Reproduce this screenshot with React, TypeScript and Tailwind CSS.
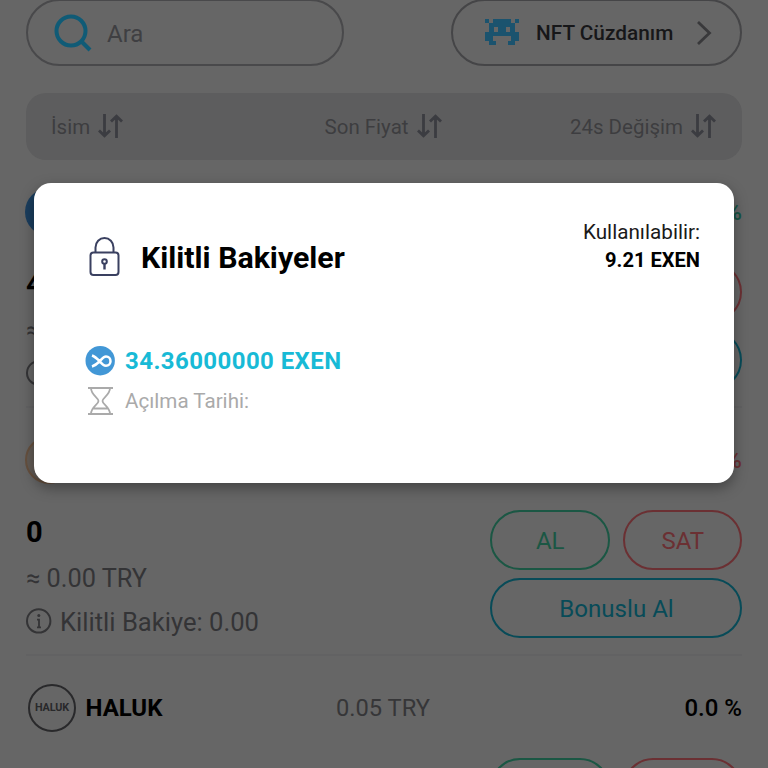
import React from 'react';

function SortIcon() {
  return (
    <svg className="h-[26px] w-[25px] shrink-0" viewBox="0 0 25 26" fill="none" stroke="#3b3c41" strokeWidth="2.8">
      <path d="M6.500 0v22M1 16.500l5.500 5.300 5.500-5.300M18.500 24V3M13 7.500l5.500-5.300 5.500 5.300" />
    </svg>
  );
}

function Invader() {
  return (
    <svg className="h-[27px] w-[34px] shrink-0" viewBox="0 0 34 27" fill="#1b536e">
      <path
        fillRule="evenodd"
        d="M8 0h18v4h4v9h4v9h-4v4h-7v-4h3v-5H8v5h3v4H4v-4H0v-9H4V4h4zM9 8v5h4V8zM21 8v5h4V8z"
      />
      <path d="M0 0h4v4H0zM30 0h4v4h-4z" />
    </svg>
  );
}

function InfoIcon() {
  return (
    <svg className="mb-[2px] h-[26px] w-[26px] shrink-0" viewBox="0 0 26 26" fill="none" stroke="#343436" strokeWidth="2">
      <circle cx="12.700" cy="12.900" r="11.700" />
      <path d="M11 11.700h2v8M11 19.400h4" strokeWidth="1.800" />
      <circle cx="12.800" cy="7.600" r="1.500" fill="#343436" stroke="none" />
    </svg>
  );
}

type RowProps = {
  logo: React.ReactNode;
  name: string;
  price: string;
  change: string;
  changeClass: string;
  amount?: string;
};

function CoinRow({ logo, name, price, change, changeClass, amount }: RowProps) {
  return (
    <section className="h-[248px] shrink-0 border-b-2 border-[#626263] pt-[27px]">
      <div className="grid h-[50px] grid-cols-3 items-center">
        <div className="flex items-center">
          <div className="h-12 w-[60px]">{logo}</div>
          <span className="-ml-[0.500px] text-[24px] font-bold text-black">{name}</span>
        </div>
        <span className="pt-px pr-[2px] text-center text-[23.7px] text-[#363638]">{price}</span>
        <span className={`text-right text-[24px] font-medium ${changeClass}`}>{change}</span>
      </div>
      <div className="flex justify-end pt-[25px]">
        {amount && (
          <div className="mr-auto flex flex-col">
            <span className="h-[44px] text-[29px] leading-[44px] font-bold text-black">{amount}</span>
            <span className="mt-[3px] h-[44px] text-[25.3px] leading-[44px] text-[#343436]">≈ 0.00 TRY</span>
            <div className="flex h-[42px] items-center gap-2 text-[25.600px] text-[#343436]">
              <InfoIcon />
              <span>Kilitli Bakiye: 0.00</span>
            </div>
          </div>
        )}
        <div className="grid w-[252px] grid-cols-2 content-start gap-x-[13px] gap-y-2 text-[24px]">
          <button className="h-[60px] rounded-full border-2 border-[#1b5744] pt-px pl-px text-[#1b5744]">AL</button>
          <button className="h-[60px] rounded-full border-2 border-[#6b3033] pt-px pl-px text-[#6b3033]">SAT</button>
          <button className="col-span-2 h-[60px] rounded-full border-2 border-[#084b58] pt-[2px] pl-px text-[24.1px] text-[#084b58]">
            Bonuslu Al
          </button>
        </div>
      </div>
    </section>
  );
}

function LockedBalances() {
  return (
    <div
      role="dialog"
      className="absolute top-[183px] left-[34px] h-[300px] w-[700px] rounded-[17px] bg-white pr-[34px] pl-[51px] shadow-[0_5px_14px_0px_rgba(0,0,0,0.35)]"
    >
      <div className="flex justify-between pt-[36px]">
        <div className="flex items-center pt-[18px]">
          <svg className="mb-px h-[40px] w-[38px]" viewBox="0 0 38 40" fill="none" stroke="#3a4060" strokeWidth="2">
            <rect x="5.500" y="15.500" width="28" height="22.500" rx="3" />
            <path d="M10.500 15.500V10.500a9 9.500 0 0 1 18 0v5" />
            <circle cx="19.500" cy="24.500" r="2.300" />
            <path d="M19.500 26.500v6" strokeWidth="2.400" />
          </svg>
          <h1 className="pl-[18px] text-[30.3px] leading-9 font-bold text-black">Kilitli Bakiyeler</h1>
        </div>
        <div className="flex flex-col items-end text-[20.700px] leading-[27.500px] text-black">
          <span className="text-[#1a1a1a]">Kullanılabilir:</span>
          <span className="text-[20.100px] font-bold">9.21 EXEN</span>
        </div>
      </div>
      <div className="flex items-center gap-[9px] pt-[64px]">
        <svg className="h-[30px] w-[31px]" viewBox="0 0 31 30" fill="none">
          <circle cx="15.200" cy="14.700" r="14.700" fill="#4297d6" />
          <path
            d="M7 9.500c3 1 5.500 3.500 8 6 2.500 3.500 4.500 4.200 6 4.200 2.700 0 4.500-2 4.500-4.500s-1.800-4.700-4.500-4.700c-3 0-4.500 3-6.500 5S10 19.500 7 20.500"
            stroke="#fff"
            strokeWidth="2.500"
          />
        </svg>
        <span className="text-[24px] leading-[38px] font-bold tracking-[0.420px] text-[#18bad6]">34.36000000 EXEN</span>
      </div>
      <div className="flex items-center gap-[9px]">
        <svg className="h-[30px] w-[31px]" viewBox="0 0 31 30" fill="none" stroke="#aaa" strokeWidth="1.800">
          <path d="M3 2h25M3 28h25M6 2c0 7 7.500 9.500 7.500 13S6 21 6 28M25 2c0 7-7.500 9.500-7.500 13S25 21 25 28M8 22.500h15" />
        </svg>
        <span className="pt-px text-[20.600px] leading-[40px] text-[#aaa]">Açılma Tarihi:</span>
      </div>
    </div>
  );
}

export default function App() {
  return (
    <main className="relative flex h-[768px] w-[768px] flex-col overflow-hidden bg-[#666] px-[26px] font-['Roboto',sans-serif] whitespace-nowrap">
      <div className="-mt-px flex h-[67px] shrink-0 justify-between">
        <div className="flex w-[318px] items-center rounded-full border-2 border-[#49494b] pl-[26px]">
          <svg className="h-[38px] w-[38px]" viewBox="0 0 38 38" fill="none" stroke="#105b76" strokeWidth="4">
            <circle cx="17" cy="17" r="14.500" />
            <path d="m27 27 9 9" />
          </svg>
          <span className="pt-[2px] pl-[15px] text-[24px] text-[#3f3f42]">Ara</span>
        </div>
        <button className="flex w-[291px] items-center rounded-full border-2 border-[#454547] pl-[32px] text-[20.800px] font-medium text-[#171719]">
          <Invader />
          <span className="pt-[2px] pl-[17px]">NFT Cüzdanım</span>
          <svg className="ml-[23px] h-[26px] w-[16px]" viewBox="0 0 16 26" fill="none" stroke="#39393b" strokeWidth="2.800">
            <path d="m2 2 11.500 11L2 24" />
          </svg>
        </button>
      </div>
      <div className="mt-[27px] flex h-[67px] shrink-0 items-center justify-between rounded-[20px] bg-[#5d5d5e] pr-[26px] pl-[25px] text-[20.500px] text-[#3d3d40]">
        <div className="flex items-center gap-2"><span className="pt-[2px]">İsim</span><SortIcon /></div>
        <div className="flex items-center gap-2 pl-[73px]"><span className="pt-[2px]">Son Fiyat</span><SortIcon /></div>
        <div className="flex items-center gap-2"><span className="pt-[2px]">24s Değişim</span><SortIcon /></div>
      </div>
      <div className="flex flex-col">
        <CoinRow
          logo={<div className="-ml-px h-12 w-12 rounded-full bg-[#1a3d5d]" />}
          name="EXEN" price="0.05 TRY" change="0.0 %" changeClass="text-[#155444]" amount="43.57"
        />
        <CoinRow
          logo={<div className="-ml-px h-12 w-12 rounded-full border-2 border-[#66503e] bg-[#625b55]" />}
          name="FB" price="0.05 TRY" change="0.0 %" changeClass="text-[#6b3033]" amount="0"
        />
        <CoinRow
          logo={
            <div className="ml-[2px] flex h-12 w-12 items-center justify-center rounded-full border-2 border-[#29292b] text-[10.800px] font-bold tracking-[-0.1px] text-[#29292b]">
              HALUK
            </div>
          }
          name="HALUK" price="0.05 TRY" change="0.0 %" changeClass="text-black"
        />
      </div>
      <LockedBalances />
    </main>
  );
}
